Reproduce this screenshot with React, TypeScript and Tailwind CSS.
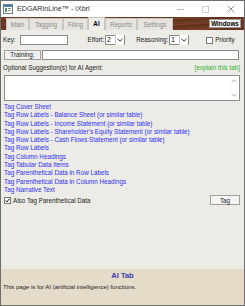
import React from 'react';

const links = [
  'Tag Cover Sheet',
  'Tag Row Labels - Balance Sheet (or similar table)',
  'Tag Row Labels - Income Statement (or similar table)',
  "Tag Row Labels - Shareholder's Equity Statement (or similar table)",
  'Tag Row Labels - Cash Flows Statement (or similar table)',
  'Tag Row Labels',
  'Tag Column Headings',
  'Tag Tabular Data Items',
  'Tag Parenthetical Data in Row Labels',
  'Tag Parenthetical Data in Column Headings',
  'Tag Narrative Text',
];

const tabs = [
  { name: 'Main', w: 'w-[23px]' },
  { name: 'Tagging', w: 'w-[34px]' },
  { name: 'Filing', w: 'w-[25px]' },
  { name: 'AI', w: 'w-[17px]', active: true },
  { name: 'Reports', w: 'w-[32px]' },
  { name: 'Settings', w: 'w-[36px]' },
];

function Chevron() {
  return (
    <div className="flex h-[10px] w-[9px] items-center justify-center border-l border-[#c9c9c9] bg-white">
      <svg width="6" height="4" viewBox="0 0 6 4">
        <path d="M0.5 0.8 L3 3.2 L5.5 0.8" fill="none" stroke="#333" strokeWidth="1" />
      </svg>
    </div>
  );
}

function Select({ value }: { value: string }) {
  return (
    <div className="flex h-[10px] w-[20px] items-center border border-[#8a8a8a] bg-white">
      <span className="flex-1 pl-[1px] leading-none text-black">{value}</span>
      <Chevron />
    </div>
  );
}

export default function App() {
  return (
    <div className="flex h-[306px] w-[245px] flex-col overflow-hidden border border-[#6d6d6d] bg-white font-['Liberation_Sans',sans-serif] text-[6.3px] text-[#222]">
      {/* Title bar */}
      <div className="flex h-[16px] shrink-0 items-center bg-white">
        <svg className="ml-[2px]" width="10" height="10" viewBox="0 0 10 10">
          <rect x="0.5" y="0.5" width="9" height="9" fill="#fff" stroke="#6b7b8c" />
          <rect x="1" y="1" width="8" height="2" fill="#4a7fb5" />
          <rect x="2" y="4" width="2" height="4" fill="#3f9a4a" />
          <rect x="5" y="4" width="3" height="1" fill="#888" />
          <rect x="5" y="6" width="3" height="1" fill="#888" />
        </svg>
        <span className="ml-[4px] text-[7.2px] text-[#333]">EDGARinLine™ - iXbrl</span>
        <div className="ml-auto flex items-center">
          <div className="h-[1px] w-[7px] bg-[#bbb]" />
          <div className="ml-[18px] h-[7px] w-[7px] border border-[#ccc]" />
          <svg className="ml-[18px] mr-[9px]" width="8" height="8" viewBox="0 0 8 8">
            <path d="M0.5 0.5 L7.5 7.5 M7.5 0.5 L0.5 7.5" stroke="#888" strokeWidth="0.9" />
          </svg>
        </div>
      </div>

      {/* Tab strip */}
      <div className="flex h-[13px] shrink-0 items-end bg-[repeating-linear-gradient(176deg,#6a3520_0px,#7a4128_2px,#5e2e1b_4px,#733d25_6px)] pl-[5px] pr-[3px]">
        {tabs.map((t) => (
          <div
            key={t.name}
            className={`flex ${t.w} items-center justify-center border border-b-0 border-[#c8c6c0] ${
              t.active
                ? 'h-[13px] bg-[#efeee9] font-bold text-black'
                : 'h-[12px] bg-[#e6e4de] text-[#8a8a8a]'
            }`}
          >
            {t.name}
          </div>
        ))}
        <div className="ml-auto mb-[2px] flex h-[9px] w-[32px] items-center justify-center border border-[#999] bg-[#f4f4f4] font-bold text-black">
          Windows
        </div>
      </div>

      {/* Content */}
      <div className="flex flex-1 flex-col bg-[#ecebe6] px-[2px] pt-[5px]">
        <div className="flex h-[10px] items-center">
          <span>Key:</span>
          <div className="ml-[4px] h-[10px] w-[48px] border border-[#8a8a8a] bg-white" />
          <span className="ml-[20px]">Effort:</span>
          <div className="ml-[1px]">
            <Select value="2" />
          </div>
          <span className="ml-[11px]">Reasoning:</span>
          <div className="ml-[1px]">
            <Select value="1" />
          </div>
          <div className="ml-[17px] h-[7px] w-[7px] border border-[#777] bg-white" />
          <span className="ml-[2px]">Priority</span>
        </div>

        <div className="mt-[5px] flex h-[10px] items-center pl-[1px] pr-[3px]">
          <div className="flex h-[10px] w-[37px] items-center justify-center border border-[#a0a0a0] bg-[#f0f0f0] text-[#222]">
            Training:
          </div>
          <div className="ml-[1px] h-[10px] flex-1 border border-[#8a8a8a] bg-white" />
        </div>

        <div className="mt-[4px] flex h-[8px] items-center pr-[2px]">
          <span>Optional Suggestion(s) for AI Agent:</span>
          <span className="ml-auto text-[#2cb52c]">[explain this tab]</span>
        </div>

        <div className="ml-[1px] mr-[2px] mt-[3px] flex h-[26px] justify-end border border-[#8e8e8e] bg-white pr-[2px]">
          <div className="flex flex-col justify-between py-[3px]">
            <svg width="6" height="4" viewBox="0 0 6 4">
              <path d="M0.5 3.2 L3 0.8 L5.5 3.2" fill="none" stroke="#aaa" strokeWidth="1" />
            </svg>
            <svg width="6" height="4" viewBox="0 0 6 4">
              <path d="M0.5 0.8 L3 3.2 L5.5 0.8" fill="none" stroke="#aaa" strokeWidth="1" />
            </svg>
          </div>
        </div>

        <div className="mt-[2px] flex flex-col pl-[1px] leading-[8.3px] text-[#2f2ff0]">
          {links.map((l) => (
            <span key={l}>{l}</span>
          ))}
        </div>

        <div className="mt-[1px] flex h-[10px] items-center pl-[1px] pr-[2px]">
          <div className="flex h-[7px] w-[7px] items-center justify-center border border-[#777] bg-white">
            <svg width="5" height="5" viewBox="0 0 5 5">
              <path d="M0.6 2.6 L1.9 4 L4.4 0.8" fill="none" stroke="#111" strokeWidth="1" />
            </svg>
          </div>
          <span className="ml-[2px]">Also Tag Parenthetical Data</span>
          <div className="ml-auto flex h-[10px] w-[30px] items-center justify-center border border-[#a0a0a0] bg-[#f4f4f4]">
            Tag
          </div>
        </div>
      </div>

      {/* Footer */}
      <div className="flex h-[36px] shrink-0 flex-col bg-[#e4dbc8] px-[2px] pt-[2px]">
        <div className="text-center text-[7.5px] font-bold leading-[9px] text-[#3a3ab0]">AI Tab</div>
        <div className="mt-[3px] text-[6px]">This page is for AI (artificial intelligence) functions.</div>
      </div>
    </div>
  );
}
